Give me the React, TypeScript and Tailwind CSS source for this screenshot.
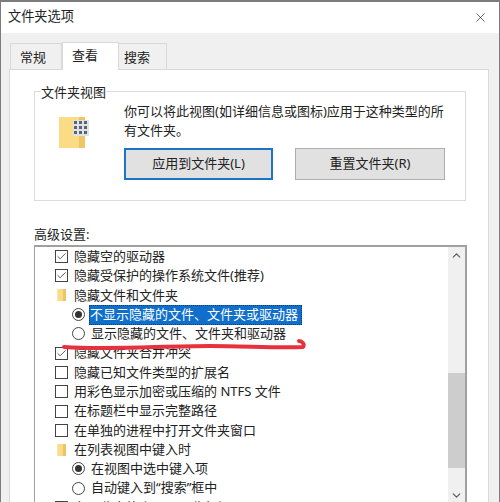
import { Check, ChevronDown, ChevronUp, X } from "lucide-react"

type Row = {
  kind: "check" | "folder" | "radio"
  label: string
  on?: boolean
  selected?: boolean
}

const rows: Row[] = [
  { kind: "check", label: "隐藏空的驱动器", on: true },
  { kind: "check", label: "隐藏受保护的操作系统文件(推荐)", on: true },
  { kind: "folder", label: "隐藏文件和文件夹" },
  { kind: "radio", label: "不显示隐藏的文件、文件夹或驱动器", on: true, selected: true },
  { kind: "radio", label: "显示隐藏的文件、文件夹和驱动器" },
  { kind: "check", label: "隐藏文件夹合并冲突", on: true },
  { kind: "check", label: "隐藏已知文件类型的扩展名" },
  { kind: "check", label: "用彩色显示加密或压缩的 NTFS 文件" },
  { kind: "check", label: "在标题栏中显示完整路径" },
  { kind: "check", label: "在单独的进程中打开文件夹窗口" },
  { kind: "folder", label: "在列表视图中键入时" },
  { kind: "radio", label: "在视图中选中键入项", on: true },
  { kind: "radio", label: "自动键入到“搜索”框中" },
  { kind: "check", label: "在预览窗格中显示预览句柄", on: true },
]

function SmallFolder() {
  return (
    <svg className="ml-[2px] mr-[8px] h-3 w-[9px] shrink-0" viewBox="0 0 9 12">
      <rect x="0" y="0" width="9" height="12" fill="#fbdc85" />
      <rect x="6" y="0" width="3" height="12" fill="#e9c46a" />
      <rect x="0" y="0" width="1" height="12" fill="#f5e6b8" />
    </svg>
  )
}

function TreeRow({ row }: { row: Row }) {
  if (row.kind === "radio") {
    return (
      <div className="flex h-[19.3px] items-center pl-[37px]">
        <span className="mr-1 flex h-[13px] w-[13px] shrink-0 items-center justify-center rounded-full border border-[#444] bg-white">
          {row.on ? <span className="h-[7px] w-[7px] rounded-full bg-[#333]" /> : null}
        </span>
        <span
          className={
            row.selected
              ? "-my-px flex h-5 w-[213px] items-center whitespace-nowrap border border-dotted border-[#0b3f78] bg-[#0f6fcb] text-white"
              : "whitespace-nowrap pl-[2px]"
          }
        >
          {row.label}
        </span>
      </div>
    )
  }

  return (
    <div className="flex h-[19.3px] items-center pl-[20px]">
      {row.kind === "check" ? (
        <span className="mr-[6px] flex h-[13px] w-[13px] shrink-0 items-center justify-center border border-[#444] bg-white">
          {row.on ? <Check className="h-[11px] w-[11px] text-[#222]" strokeWidth={1.6} /> : null}
        </span>
      ) : (
        <SmallFolder />
      )}
      <span className="whitespace-nowrap">{row.label}</span>
    </div>
  )
}

export default function App() {
  return (
    <div className="h-[502px] w-[500px] overflow-hidden border-l border-r border-t-2 border-[#7c7c7c] bg-[#f0f0f0] font-['Noto_Sans','Noto_Sans_CJK_SC',sans-serif] text-[13px] text-[#222]">
      <div className="flex h-[31px] items-center justify-between bg-white pb-px pl-[7px] pr-[11px]">
        <span className="text-[13.2px] leading-none">文件夹选项</span>
        <X className="h-[15px] w-[15px] text-[#333]" strokeWidth={1.2} />
      </div>

      <div className="flex h-[36px] items-end pl-[9px]">
        <div className="flex h-[26px] w-[52px] items-center border border-b-0 border-[#d9d9d9] bg-[#f0f0f0] pl-[9px] pt-0.5">常规</div>
        <div className="relative z-10 -mb-px flex h-[28px] w-[57px] items-start border border-b-0 border-[#d9d9d9] bg-white pl-[9px] pt-[3px]">查看</div>
        <div className="flex h-[26px] w-[48px] items-center border border-b-0 border-l-0 border-[#d9d9d9] bg-[#f0f0f0] pl-[5px] pt-0.5">搜索</div>
      </div>

      <div className="relative ml-[8px] h-[440px] w-[480px] border border-[#d9d9d9] bg-white px-[24px] pt-[21px]">
        <div className="relative h-[110px] w-[432px] border border-[#dcdcdc]">
          <span className="absolute -top-[9px] left-[6px] bg-white leading-[18px]">文件夹视图</span>
          <div className="flex pl-[24px] pt-[25px]">
            <svg className="h-8 w-[31px] shrink-0" viewBox="0 0 31 32">
              <rect x="0" y="0" width="26" height="31" fill="#fbdc85" />
              <rect x="20" y="0" width="6" height="31" fill="#eec664" />
              <rect x="14" y="3" width="16" height="16" fill="#dfe3e8" />
              <g fill="#5b6472">
                <rect x="15" y="4" width="3" height="3" />
                <rect x="20" y="4" width="3" height="3" />
                <rect x="25" y="4" width="3" height="3" />
                <rect x="15" y="9" width="3" height="3" />
                <rect x="20" y="9" width="3" height="3" />
                <rect x="25" y="9" width="3" height="3" />
                <rect x="15" y="14" width="3" height="3" />
                <rect x="20" y="14" width="3" height="3" />
                <rect x="25" y="14" width="3" height="3" />
              </g>
            </svg>
            <div className="ml-[34px] mt-[-15px]">
              <p className="w-[325px] leading-[19px]">你可以将此视图(如详细信息或图标)应用于这种类型的所有文件夹。</p>
              <div className="mt-[8px] flex gap-[22px]">
                <button className="h-[32px] w-[149px] border-2 border-[#1b74c5] bg-[#e1e1e1]" type="button">应用到文件夹(L)</button>
                <button className="h-[32px] w-[150px] border border-[#adadad] bg-[#e1e1e1]" type="button">重置文件夹(R)</button>
              </div>
            </div>
          </div>
        </div>

        <p className="mt-[24px] leading-[18px]">高级设置:</p>
        <div className="mt-[2px] flex h-[262px] w-[433px] overflow-hidden border-l border-t-2 border-r-2 border-[#a0a0a0]">
          <div className="min-w-0 flex-1">
            {rows.map((row) => (
              <TreeRow key={row.label} row={row} />
            ))}
          </div>
          <div className="flex h-[257px] w-[17px] shrink-0 flex-col bg-[#f0f0f0]">
            <div className="flex h-[17px] items-center justify-center"><ChevronUp className="h-[13px] w-[13px] text-[#555]" strokeWidth={2} /></div>
            <div className="mt-[109px] h-[95px] bg-[#cdcdcd]" />
            <div className="mt-auto flex h-[17px] items-center justify-center"><ChevronDown className="h-[13px] w-[13px] text-[#555]" strokeWidth={2} /></div>
          </div>
        </div>
      </div>

      {/* red marker stroke drawn over the list */}
      <svg className="pointer-events-none absolute left-0 top-0 h-[502px] w-[500px]" viewBox="0 0 500 502">
        <path
          d="M64 347 C110 350 160 346 210 346 C245 346 275 348 303 347 C305 344 302 341 299 341"
          fill="none"
          stroke="#e7313c"
          strokeLinecap="round"
          strokeLinejoin="round"
          strokeWidth="4"
        />
      </svg>
    </div>
  )
}
